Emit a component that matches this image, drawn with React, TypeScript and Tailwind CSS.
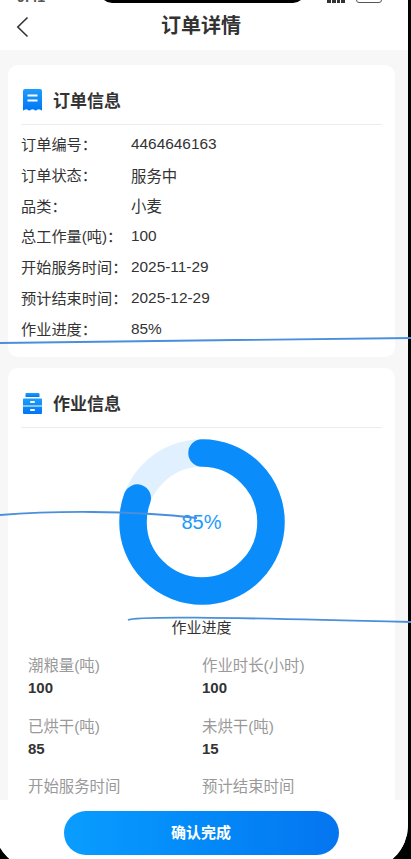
const font = { fontFamily: '"Liberation Sans", "Noto Sans CJK SC", sans-serif' }

const ORDER_ROWS = [
  { label: '订单编号：', value: '4464646163', shift: '-translate-y-[2px]' },
  { label: '订单状态：', value: '服务中', shift: '' },
  { label: '品类：', value: '小麦', shift: '' },
  { label: '总工作量(吨)：', value: '100', shift: '-translate-y-[2px]' },
  { label: '开始服务时间：', value: '2025-11-29', shift: '-translate-y-[2px]' },
  { label: '预计结束时间：', value: '2025-12-29', shift: '-translate-y-[2px]' },
  { label: '作业进度：', value: '85%', shift: '-translate-y-[2px]' },
]

const STATS = [
  { label: '潮粮量(吨)', value: '100' },
  { label: '作业时长(小时)', value: '100' },
  { label: '已烘干(吨)', value: '85' },
  { label: '未烘干(吨)', value: '15' },
  { label: '开始服务时间', value: '2025-11-29' },
  { label: '预计结束时间', value: '2025-12-29' },
]

function ReceiptIcon() {
  return (
    <svg width="19" height="22" viewBox="0 0 19 22" className="shrink-0">
      <defs>
        <linearGradient id="receipt" x1="0" y1="0" x2="0" y2="1">
          <stop offset="0" stopColor="#1e9dfd" />
          <stop offset="1" stopColor="#0076f6" />
        </linearGradient>
      </defs>
      <path
        d="M2 0h15a2 2 0 0 1 2 2v19.5c-1.6 0-1.6-1.2-3.2-1.2s-1.6 1.2-3.1 1.2-1.6-1.2-3.2-1.2-1.6 1.2-3.2 1.2-1.6-1.2-3.1-1.2S1.600 21.500 0 21.500V2a2 2 0 0 1 2-2z"
        fill="url(#receipt)"
      />
      <rect x="4.500" y="5.500" width="10" height="2" fill="#fff" />
      <rect x="4.500" y="10.500" width="10" height="2" fill="#fff" />
    </svg>
  )
}

function DrawerIcon() {
  return (
    <svg width="19" height="21" viewBox="0 0 19 21" className="shrink-0">
      <defs>
        <linearGradient id="drawer" x1="0" y1="0" x2="0" y2="1">
          <stop offset="0" stopColor="#1e9dfd" />
          <stop offset="1" stopColor="#0076f6" />
        </linearGradient>
      </defs>
      <path d="M3.500 0h12a1 1 0 0 1 1 1v3h-14V1a1 1 0 0 1 1-1z" fill="url(#drawer)" />
      <path d="M1 5.500h17a1 1 0 0 1 1 1v6H0v-6a1 1 0 0 1 1-1zM0 13.500h19V20a1 1 0 0 1-1 1H1a1 1 0 0 1-1-1z" fill="url(#drawer)" />
      <rect x="7" y="8" width="5" height="2" rx="1" fill="#fff" />
      <rect x="7" y="16" width="5" height="2" rx="1" fill="#fff" />
    </svg>
  )
}

function SectionTitle({ icon, children }: { icon: React.ReactNode; children: React.ReactNode }) {
  return (
    <div className="flex items-center gap-[11px] h-[48px] pb-[1px] border-b border-[#ececec] pl-[2px]">
      {icon}
      <span className="text-[17px] font-bold text-[#333] pt-[3px]">{children}</span>
    </div>
  )
}

function Donut() {
  return (
    <div className="relative w-[166px] h-[166px]">
      <svg width="166" height="166" viewBox="0 0 166 166" className="block">
        <circle cx="83" cy="83" r="69" fill="none" stroke="#e0f0fe" strokeWidth="27.500" />
        <circle
          cx="83"
          cy="83"
          r="69"
          fill="none"
          stroke="#0a8dfa"
          strokeWidth="27.500"
          strokeLinecap="round"
          strokeDasharray="349 434"
          transform="rotate(-90 83 83)"
        />
      </svg>
      <div className="absolute inset-0 flex items-center justify-center text-[20px] text-[#1c9bfc]">85%</div>
    </div>
  )
}

export default function App() {
  return (
    <div className="relative w-[411px] h-[859px] bg-black overflow-hidden" style={font}>
      {/* device frame runs past the window on the left and bottom */}
      <div className="-ml-[6px] w-[414px] h-[870px] pl-[6px] flex flex-col bg-white rounded-b-[45px] overflow-hidden">
        {/* status bar, mostly cut off */}
        <div className="relative h-[2px] shrink-0">
          <div className="absolute left-[100px] -top-[10px] w-[205px] h-[13px] bg-black rounded-b-[12px]" />
          <span className="absolute left-[17px] -top-[11px] text-[14px] leading-[16px] font-bold text-[#555]">9:41</span>
          <div className="absolute left-[327px] -top-[2px] w-[18px] h-[5px] flex gap-[1px]">
            <span className="flex-1 bg-[#333]" />
            <span className="flex-1 bg-[#333]" />
            <span className="flex-1 bg-[#333]" />
            <span className="flex-1 bg-[#333]" />
          </div>
          <div className="absolute left-[356px] -top-[10px] w-[26px] h-[13px] border border-[#555] rounded-[3px]" />
        </div>

        {/* header */}
        <header className="relative h-[48px] shrink-0 flex items-center justify-center pr-[6px]">
          <svg width="13" height="22" viewBox="0 0 13 22" className="absolute left-[16px] top-[14px]">
            <path d="M11.500 1.500 1.800 11l9.700 9.500" fill="none" stroke="#333" strokeWidth="1.600" />
          </svg>
          <h1 className="text-[20px] font-bold text-[#333] leading-none">订单详情</h1>
        </header>

        <main className="flex-1 min-h-0 overflow-hidden bg-[#f7f7f7] pl-[8px] pr-[13px] pt-[15px] flex flex-col gap-[11px]">
          <section className="shrink-0 bg-white rounded-[10px] px-[13px] pt-[12px] h-[292px]">
            <SectionTitle icon={<ReceiptIcon />}>订单信息</SectionTitle>
            <div className="pt-[5px] flex flex-col">
              {ORDER_ROWS.map(r => (
                <div key={r.label} className="flex items-center h-[30.800px] text-[15.200px] text-[#333]">
                  <span className="w-[110px] shrink-0">{r.label}</span>
                  <span className={`text-[15.400px] ${r.shift}`}>{r.value}</span>
                </div>
              ))}
            </div>
          </section>

          <section className="shrink-0 bg-white rounded-[10px] px-[13px] pt-[12px] pb-[16px]">
            <SectionTitle icon={<DrawerIcon />}>作业信息</SectionTitle>
            <div className="flex flex-col items-center pt-[11px]">
              <Donut />
              <div className="mt-[13px] text-[15px] leading-[20px] text-[#333]">作业进度</div>
            </div>
            <div className="grid grid-cols-[174px_1fr] gap-y-[16.500px] mt-[17px] pl-[7px]">
              {STATS.map(s => (
                <div key={s.label} className="h-[44px]">
                  <div className="text-[15.400px] leading-[22px] text-[#999]">{s.label}</div>
                  <div className="text-[15px] leading-[22px] font-bold text-[#333]">{s.value}</div>
                </div>
              ))}
            </div>
          </section>
        </main>

        {/* footer */}
        <footer className="shrink-0 h-[70px] bg-white flex justify-center pt-[11px] pr-[6px]">
          <button className="w-[275px] h-[44px] rounded-full bg-gradient-to-r from-[#0a9dff] to-[#0575f0] text-white text-[15px] font-bold">
            确认完成
          </button>
        </footer>
      </div>

      {/* stray pen lines lying over the page */}
      <svg width="411" height="859" viewBox="0 0 411 859" className="absolute inset-0 pointer-events-none">
        <g fill="none" stroke="#4a8fdc" strokeWidth="1.800">
          <path d="M0 343C120 342 280 339 411 338" />
          <path d="M0 515C50 511 130 510 197 518" />
          <path d="M128 620C135 616 210 617 411 622" />
        </g>
      </svg>
    </div>
  )
}
